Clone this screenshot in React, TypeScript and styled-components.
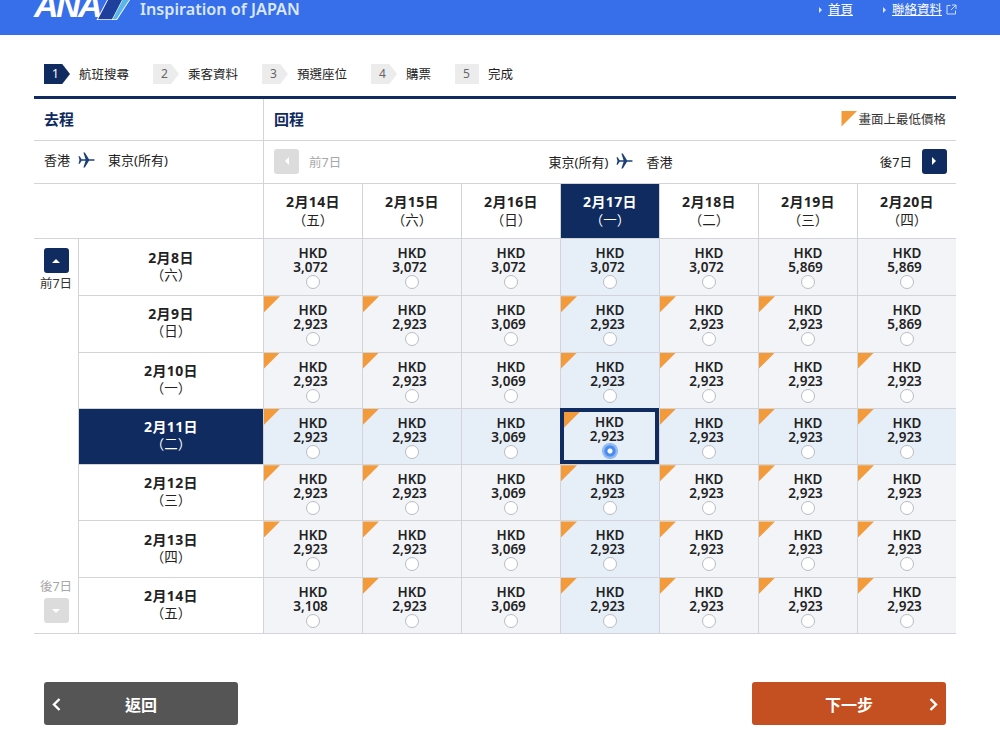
import React from 'react';
import styled, { createGlobalStyle } from 'styled-components';

const NAVY = '#0f2b5f';
const LINE = '#d2d4d8';
const FONT = '"Noto Sans", "Noto Sans CJK TC", sans-serif';

const GlobalStyle = createGlobalStyle`
  html, body {
    margin: 0;
    padding: 0;
    background: #fff;
  }
  body {
    font-family: ${FONT};
    color: #222;
    overflow: hidden;
  }
`;

interface Fare {
  price: string;
  lowest: boolean;
}

const STEPS = ['航班搜尋', '乘客資料', '預選座位', '購票', '完成'];

const RETURN_DATES = [
  { date: '2月14日', day: '（五）' },
  { date: '2月15日', day: '（六）' },
  { date: '2月16日', day: '（日）' },
  { date: '2月17日', day: '（一）' },
  { date: '2月18日', day: '（二）' },
  { date: '2月19日', day: '（三）' },
  { date: '2月20日', day: '（四）' },
];

const OUTBOUND_DATES = [
  { date: '2月8日', day: '（六）' },
  { date: '2月9日', day: '（日）' },
  { date: '2月10日', day: '（一）' },
  { date: '2月11日', day: '（二）' },
  { date: '2月12日', day: '（三）' },
  { date: '2月13日', day: '（四）' },
  { date: '2月14日', day: '（五）' },
];

const low = (price: string): Fare => ({ price, lowest: true });
const plain = (price: string): Fare => ({ price, lowest: false });

const standardRow = [low('2,923'), low('2,923'), plain('3,069'), low('2,923'), low('2,923'), low('2,923'), low('2,923')];

const FARES: Fare[][] = [
  [plain('3,072'), plain('3,072'), plain('3,072'), plain('3,072'), plain('3,072'), plain('5,869'), plain('5,869')],
  [low('2,923'), low('2,923'), plain('3,069'), low('2,923'), low('2,923'), low('2,923'), plain('5,869')],
  standardRow,
  standardRow,
  standardRow,
  standardRow,
  [plain('3,108'), low('2,923'), plain('3,069'), low('2,923'), low('2,923'), low('2,923'), low('2,923')],
];

const SELECTED_ROW = 3;
const SELECTED_COL = 3;

function PlaneIcon() {
  return (
    <svg width="17" height="16" viewBox="0 0 17 16" fill="#1d3f78" aria-hidden="true">
      <path d="M0.5 4.2 L1.7 4.2 L3.6 7.2 L7.6 7.2 L5.4 0.6 L6.8 0.6 L11 7.2 L15 7.2 C16.2 7.2 16.8 7.6 16.8 8 C16.8 8.4 16.2 8.8 15 8.8 L11 8.8 L6.8 15.4 L5.4 15.4 L7.6 8.8 L3.6 8.8 L1.7 11.8 L0.5 11.8 L1.5 8 Z" />
    </svg>
  );
}

function Arrow({ dir }: { dir: 'up' | 'down' | 'left' | 'right' }) {
  const points = {
    up: '1,7 5,3 9,7',
    down: '1,3 5,7 9,3',
    left: '7,1 3,5 7,9',
    right: '3,1 7,5 3,9',
  }[dir];
  return (
    <svg width="10" height="10" viewBox="0 0 10 10" fill="#fff" aria-hidden="true">
      <polygon points={points} />
    </svg>
  );
}

function Chevron({ dir }: { dir: 'left' | 'right' }) {
  return (
    <svg width="9" height="13" viewBox="0 0 9 13" fill="none" stroke="#fff" strokeWidth="2.4" aria-hidden="true">
      <polyline points={dir === 'left' ? '7.5,1 2,6.5 7.5,12' : '1.5,1 7,6.5 1.5,12'} />
    </svg>
  );
}

export default function App() {
  return (
    <Page>
      <GlobalStyle />
      <Header>
        <Brand>
          <LogoText>ANA</LogoText>
          <svg width="34" height="20" viewBox="0 0 34 20" aria-hidden="true">
            <polygon points="0.5,20 11,0 34,0 21,20" fill="#fff" />
            <polygon points="2,19.3 12,0 26,0 16,19.3" fill="#1f3f9c" />
            <polygon points="16.6,19.3 26.6,0 33,0 20.4,19.3" fill="#59b7e8" />
          </svg>
          <Tagline>Inspiration of JAPAN</Tagline>
        </Brand>
        <HeaderLinks>
          <HeaderLink>首頁</HeaderLink>
          <HeaderLink>
            聯絡資料
            <svg width="11" height="11" viewBox="0 0 11 11" fill="none" stroke="#cfe0fb" strokeWidth="1" aria-hidden="true">
              <path d="M4.5 1.5 H1 V10 H9.5 V6.5 M6 1 H10 V5 M10 1 L5 6" />
            </svg>
          </HeaderLink>
        </HeaderLinks>
      </Header>

      <Stepper>
        {STEPS.map((label, i) => (
          <Step key={label}>
            <StepBadge $active={i === 0} $last={i === STEPS.length - 1}>
              {i + 1}
            </StepBadge>
            <StepLabel>{label}</StepLabel>
          </Step>
        ))}
      </Stepper>

      <Board>
        <TopArea>
          <LegPanel>
            <LegTitle>
              <span>去程</span>
            </LegTitle>
            <RouteRow>
              <RouteText>香港</RouteText>
              <PlaneIcon />
              <RouteDest>東京(所有)</RouteDest>
            </RouteRow>
          </LegPanel>
          <ReturnPanel>
            <LegTitle>
              <span>回程</span>
              <Legend>
                <LegendMark />
                畫面上最低價格
              </Legend>
            </LegTitle>
            <WeekNav>
              <WeekSide>
                <NavButton $disabled>
                  <Arrow dir="left" />
                </NavButton>
                <WeekLabel $disabled>前7日</WeekLabel>
              </WeekSide>
              <WeekRoute>
                <RouteText>東京(所有)</RouteText>
                <PlaneIcon />
                <RouteDest>香港</RouteDest>
              </WeekRoute>
              <WeekSide>
                <WeekLabel>後7日</WeekLabel>
                <NavButton>
                  <Arrow dir="right" />
                </NavButton>
              </WeekSide>
            </WeekNav>
          </ReturnPanel>
        </TopArea>

        <DateHead>
          <HeadSpacer />
          {RETURN_DATES.map((d, c) => (
            <HeadCell key={d.date} $active={c === SELECTED_COL}>
              <DateText>{d.date}</DateText>
              <DayText>{d.day}</DayText>
            </HeadCell>
          ))}
        </DateHead>

        <Matrix>
          <Rail>
            <RailGroup>
              <NavButton>
                <Arrow dir="up" />
              </NavButton>
              <RailLabel>前7日</RailLabel>
            </RailGroup>
            <RailGroup>
              <RailLabel $disabled>後7日</RailLabel>
              <NavButton $disabled>
                <Arrow dir="down" />
              </NavButton>
            </RailGroup>
          </Rail>
          <Rows>
            {OUTBOUND_DATES.map((d, r) => (
              <FareRow key={d.date}>
                <RowDate $active={r === SELECTED_ROW}>
                  <DateText>{d.date}</DateText>
                  <DayText>{d.day}</DayText>
                </RowDate>
                {FARES[r].map((fare, c) => {
                  const selected = r === SELECTED_ROW && c === SELECTED_COL;
                  return (
                    <FareCell key={c} $tinted={r === SELECTED_ROW || c === SELECTED_COL} $selected={selected}>
                      {fare.lowest && <Corner />}
                      <Currency>HKD</Currency>
                      <Amount>{fare.price}</Amount>
                      <Radio $checked={selected} />
                    </FareCell>
                  );
                })}
              </FareRow>
            ))}
          </Rows>
        </Matrix>
      </Board>

      <Footer>
        <ActionButton $color="#555555">
          <Chevron dir="left" />
          返回
        </ActionButton>
        <ActionButton $color="#c44f20" $next>
          下一步
          <Chevron dir="right" />
        </ActionButton>
      </Footer>
    </Page>
  );
}

const Page = styled.div`
  width: 1000px;
  height: 746px;
  overflow: hidden;
`;

const Header = styled.header`
  height: 35px;
  background: #366fe9;
  overflow: hidden;
  display: flex;
  justify-content: space-between;
  align-items: flex-start;
  padding: 0 43px 0 34px;
`;

const Brand = styled.div`
  display: flex;
  align-items: flex-start;
  height: 20px;

  svg {
    margin-left: 4px;
    flex: none;
  }
`;

const LogoText = styled.span`
  font: italic bold 34px/20px "Liberation Sans", sans-serif;
  letter-spacing: -2.6px;
  color: #fff;
  margin-top: -5px;
  width: 58px;
`;

const Tagline = styled.span`
  font: 600 16.2px/18px ${FONT};
  color: #dbe7fd;
  margin-left: 10px;
`;

const HeaderLinks = styled.nav`
  display: flex;
  gap: 39px;
  padding-top: 1px;
`;

const HeaderLink = styled.a`
  position: relative;
  display: flex;
  align-items: center;
  gap: 4px;
  font-size: 12.5px;
  line-height: 17px;
  color: #fff;
  text-decoration: underline;

  &::before {
    content: '';
    position: absolute;
    left: -9px;
    top: 6px;
    border-left: 3px solid #dbe7fd;
    border-top: 3px solid transparent;
    border-bottom: 3px solid transparent;
  }
`;

const Stepper = styled.ol`
  list-style: none;
  display: flex;
  gap: 24px;
  margin: 0;
  padding: 29px 0 0 44px;
  height: 32px;
`;

const Step = styled.li`
  display: flex;
  align-items: center;
  gap: 9px;
  height: 20px;
`;

const StepBadge = styled.span<{ $active: boolean; $last: boolean }>`
  width: ${({ $last }) => ($last ? '24px' : '26px')};
  height: 20px;
  box-sizing: border-box;
  padding-left: 8px;
  font-size: 12px;
  line-height: 20px;
  color: ${({ $active }) => ($active ? '#fff' : '#666')};
  background: ${({ $active }) => ($active ? NAVY : '#ececec')};
  clip-path: ${({ $last }) =>
    $last ? 'none' : 'polygon(0 0, 70% 0, 100% 50%, 70% 100%, 0 100%)'};
`;

const StepLabel = styled.span`
  font-size: 12.5px;
  line-height: 20px;
  padding-top: 1px;
  color: #222;
`;

const Board = styled.main`
  width: 922px;
  margin-left: 34px;
  border-top: 3px solid ${NAVY};
`;

const TopArea = styled.div`
  display: grid;
  grid-template-columns: 229px 693px;
`;

const LegPanel = styled.section``;

const ReturnPanel = styled.section`
  border-left: 1px solid ${LINE};
`;

const LegTitle = styled.h2`
  display: flex;
  align-items: center;
  justify-content: space-between;
  box-sizing: border-box;
  height: 42px;
  margin: 0;
  padding: 0 10px 2px;
  font-size: 15px;
  font-weight: 700;
  color: ${NAVY};
  border-bottom: 1px solid ${LINE};
`;

const Legend = styled.span`
  display: flex;
  align-items: center;
  gap: 1px;
  font-size: 12.5px;
  font-weight: 400;
  color: #333;
`;

const LegendMark = styled.i`
  width: 16px;
  height: 16px;
  background: #f39a3a;
  clip-path: polygon(0 0, 100% 0, 0 100%);
`;

const RouteRow = styled.div`
  display: flex;
  align-items: center;
  box-sizing: border-box;
  height: 39px;
  padding: 0 10px 2px;
  gap: 8px;
`;

const RouteText = styled.span`
  font-size: 13px;
  color: #222;
`;

const RouteDest = styled(RouteText)`
  margin-left: 5px;
`;

const WeekNav = styled.div`
  display: flex;
  align-items: center;
  justify-content: space-between;
  height: 42px;
  padding: 0 9px 2px 10px;
  box-sizing: border-box;
`;

const WeekSide = styled.div`
  display: flex;
  align-items: center;
  gap: 10px;
`;

const WeekRoute = styled.div`
  display: flex;
  align-items: center;
  gap: 8px;
`;

const WeekLabel = styled.span<{ $disabled?: boolean }>`
  font-size: 12.5px;
  color: ${({ $disabled }) => ($disabled ? '#a8a8a8' : '#222')};
`;

const NavButton = styled.button<{ $disabled?: boolean }>`
  display: flex;
  align-items: center;
  justify-content: center;
  width: 25px;
  height: 25px;
  padding: 0;
  border: 0;
  border-radius: 3px;
  background: ${({ $disabled }) => ($disabled ? '#dcdcdc' : NAVY)};
`;

const DateHead = styled.div`
  display: grid;
  grid-template-columns: 229px repeat(7, 1fr);
  box-sizing: border-box;
  height: 55px;
  border-top: 1px solid ${LINE};
`;

const HeadSpacer = styled.div``;

const HeadCell = styled.div<{ $active: boolean }>`
  display: flex;
  flex-direction: column;
  align-items: center;
  justify-content: center;
  padding-bottom: 1px;
  border-left: 1px solid ${LINE};
  background: ${({ $active }) => ($active ? NAVY : '#fff')};
  color: ${({ $active }) => ($active ? '#fff' : '#222')};
`;

const DateText = styled.strong`
  font-size: 14px;
  line-height: 18px;
  font-weight: 700;
  letter-spacing: 0.4px;
`;

const DayText = styled.span`
  font-size: 13.5px;
  line-height: 18px;
`;

const Matrix = styled.div`
  display: grid;
  grid-template-columns: 44px 878px;
  height: 396px;
  border-top: 1px solid ${LINE};
  border-bottom: 1px solid ${LINE};
  box-sizing: border-box;
`;

const Rail = styled.div`
  display: flex;
  flex-direction: column;
  justify-content: space-between;
  align-items: center;
  padding: 9px 0 10px;
`;

const RailGroup = styled.div`
  display: flex;
  flex-direction: column;
  align-items: center;
  gap: 2px;
`;

const RailLabel = styled.span<{ $disabled?: boolean }>`
  font-size: 12.5px;
  line-height: 18px;
  color: ${({ $disabled }) => ($disabled ? '#a8a8a8' : '#333')};
`;

const Rows = styled.div`
  display: grid;
  grid-template-rows: repeat(7, 1fr);
`;

const FareRow = styled.div`
  display: grid;
  grid-template-columns: 185px repeat(7, 1fr);

  & + & > * {
    border-top: 1px solid ${LINE};
  }
`;

const RowDate = styled.div<{ $active: boolean }>`
  display: flex;
  flex-direction: column;
  align-items: center;
  justify-content: center;
  padding-bottom: 2px;
  border-left: 1px solid ${LINE};
  background: ${({ $active }) => ($active ? NAVY : '#fff')};
  color: ${({ $active }) => ($active ? '#fff' : '#222')};

  ${DayText} {
    line-height: 17px;
  }
`;

const FareCell = styled.div<{ $tinted: boolean; $selected: boolean }>`
  position: relative;
  display: flex;
  flex-direction: column;
  align-items: center;
  box-sizing: border-box;
  padding-top: ${({ $selected }) => ($selected ? '3px' : '7px')};
  border-left: 1px solid ${LINE};
  background: ${({ $tinted }) => ($tinted ? '#e6eef8' : '#f2f4f8')};
  ${({ $selected }) => $selected && `border: 4px solid ${NAVY} !important;`}
`;

const Corner = styled.i`
  position: absolute;
  top: 0;
  left: 0;
  width: 16px;
  height: 16px;
  background: #f39a3a;
  clip-path: polygon(0 0, 100% 0, 0 100%);
`;

const Currency = styled.span`
  font-size: 13.5px;
  line-height: 14px;
  font-weight: 600;
  color: #222;
`;

const Amount = styled(Currency)`
  margin-right: 5px;
`;

const Radio = styled.span<{ $checked: boolean }>`
  width: 14px;
  height: 14px;
  margin-top: 1px;
  box-sizing: border-box;
  border-radius: 50%;
  ${({ $checked }) =>
    $checked
      ? `
    background: radial-gradient(circle, #fff 0, #fff 2px, #4a8cee 3px, #4a8cee 5px, #86b2f3 6px);
    box-shadow: 0 0 0 1px #86b2f3;
  `
      : `
    background: #fff;
    border: 1px solid #b9bcc2;
  `}
`;

const Footer = styled.footer`
  display: flex;
  justify-content: space-between;
  padding: 48px 54px 0 44px;
`;

const ActionButton = styled.button<{ $color: string; $next?: boolean }>`
  position: relative;
  width: 194px;
  height: 43px;
  border: 0;
  border-radius: 3px;
  background: ${({ $color }) => $color};
  color: #fff;
  font-family: ${FONT};
  font-size: 16px;
  font-weight: 700;

  svg {
    position: absolute;
    top: 16px;
    ${({ $next }) => ($next ? 'right: 8px;' : 'left: 8px;')}
  }
`;
